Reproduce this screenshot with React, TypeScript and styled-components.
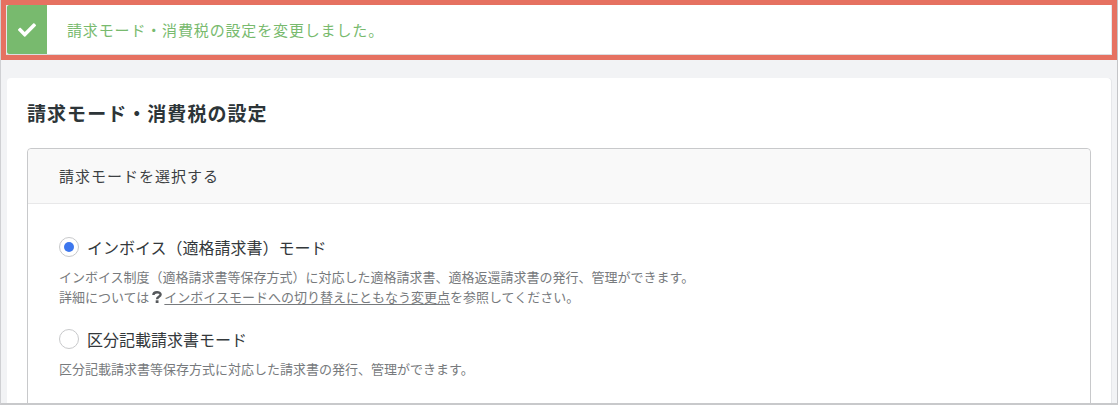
import styled, { createGlobalStyle } from "styled-components";
import { FaCheck } from "react-icons/fa";

const GlobalStyle = createGlobalStyle`
  html, body {
    margin: 0;
    padding: 0;
    background: #f2f3f5;
  }
  * {
    box-sizing: border-box;
  }
`;

const Page = styled.div`
  width: 1118px;
  height: 405px;
  overflow: hidden;
  background: #f2f3f5;
  border-left: 1px solid #cfd0d3;
  border-right: 1px solid #c4c5c8;
  border-bottom: 2px solid #c8c9cb;
  font-family: "Noto Sans CJK JP", "Noto Sans", sans-serif;
`;

const Highlight = styled.div`
  border: 5px solid #e67161;
  height: 60px;
`;

const Notice = styled.div`
  display: flex;
  align-items: center;
  height: 50px;
  background: #fff;
  border-left: 1px solid #e6e7ea;
  border-right: 1px solid #e6e7ea;
  border-bottom: 1px solid #dcdde0;
`;

const NoticeIcon = styled.div`
  display: flex;
  justify-content: center;
  align-items: center;
  width: 40px;
  height: 49px;
  padding-top: 1px;
  background: #78ba6e;
  border-radius: 2px 0 0 2px;
  color: #fff;
  font-size: 18px;
`;

const NoticeText = styled.p`
  margin: 0 0 0 20px;
  font-size: 15px;
  letter-spacing: 0.85px;
  color: #78ba6e;
`;

const Card = styled.section`
  margin: 18px 0 0 6px;
  width: 1104px;
  height: 340px;
  padding: 21px 20px 0;
  background: #fff;
  border-radius: 4px 4px 0 0;
  box-shadow: 1px 0 0 #e6e7ea;
`;

const Title = styled.h1`
  margin: 0;
  font-size: 19px;
  font-weight: 700;
  line-height: 27px;
  letter-spacing: 1.05px;
  color: #2d3538;
`;

const Panel = styled.div`
  margin-top: 22px;
  height: 300px;
  border: 1px solid #c8c9cb;
  border-radius: 4px 4px 0 0;
`;

const PanelHeader = styled.div`
  height: 55px;
  padding: 0 0 2px 31px;
  display: flex;
  align-items: center;
  background: #f9f9f9;
  border-bottom: 1px solid #e8e8e9;
  border-radius: 4px 4px 0 0;
  font-size: 15px;
  letter-spacing: 1px;
  color: #3c4043;
`;

const PanelBody = styled.div`
  padding: 31px 31px 0;
`;

const Option = styled.label`
  display: flex;
  align-items: center;
  gap: 8px;
  height: 24px;
  font-size: 16px;
  color: #33383b;
`;

const Radio = styled.span<{ $checked?: boolean }>`
  display: flex;
  justify-content: center;
  align-items: center;
  width: 20px;
  height: 20px;
  border: 1px solid #c8c9cb;
  border-radius: 50%;
  background: #fff;

  &::after {
    content: "";
    display: ${(p) => (p.$checked ? "block" : "none")};
    width: 10px;
    height: 10px;
    border-radius: 50%;
    background: #3d77ee;
  }
`;

const Description = styled.p`
  margin: 8px 0 0;
  font-size: 13px;
  line-height: 20px;
  color: #777a7d;

  & + label {
    margin-top: 20px;
  }
`;

const HelpLink = styled.a`
  color: #777a7d;
  text-decoration: underline;
  text-underline-offset: 2px;
`;

const HelpSvg = styled.svg`
  margin: 0 2px 0 3px;
  width: 10px;
  height: 12px;
  vertical-align: -1px;
  color: #55585b;
`;

const HelpMark = () => (
  <HelpSvg viewBox="0 0 10 12" aria-hidden="true">
    <path
      d="M1.4 3.9C1.4 0.4 8.6 0.4 8.6 3.6 8.6 6 5.1 5.7 5.1 8.2"
      fill="none"
      stroke="currentColor"
      strokeWidth="2.4"
    />
    <rect x="3.7" y="9.3" width="2.8" height="2.7" fill="currentColor" />
  </HelpSvg>
);

export default function App() {
  return (
    <>
      <GlobalStyle />
      <Page>
        <Highlight>
          <Notice>
            <NoticeIcon>
              <FaCheck />
            </NoticeIcon>
            <NoticeText>請求モード・消費税の設定を変更しました。</NoticeText>
          </Notice>
        </Highlight>
        <Card>
          <Title>請求モード・消費税の設定</Title>
          <Panel>
            <PanelHeader>請求モードを選択する</PanelHeader>
            <PanelBody>
              <Option>
                <Radio $checked />
                インボイス（適格請求書）モード
              </Option>
              <Description>
                インボイス制度（適格請求書等保存方式）に対応した適格請求書、適格返還請求書の発行、管理ができます。
                <br />
                詳細については
                <HelpMark />
                <HelpLink>インボイスモードへの切り替えにともなう変更点</HelpLink>
                を参照してください。
              </Description>
              <Option>
                <Radio />
                区分記載請求書モード
              </Option>
              <Description>
                区分記載請求書等保存方式に対応した請求書の発行、管理ができます。
              </Description>
            </PanelBody>
          </Panel>
        </Card>
      </Page>
    </>
  );
}
